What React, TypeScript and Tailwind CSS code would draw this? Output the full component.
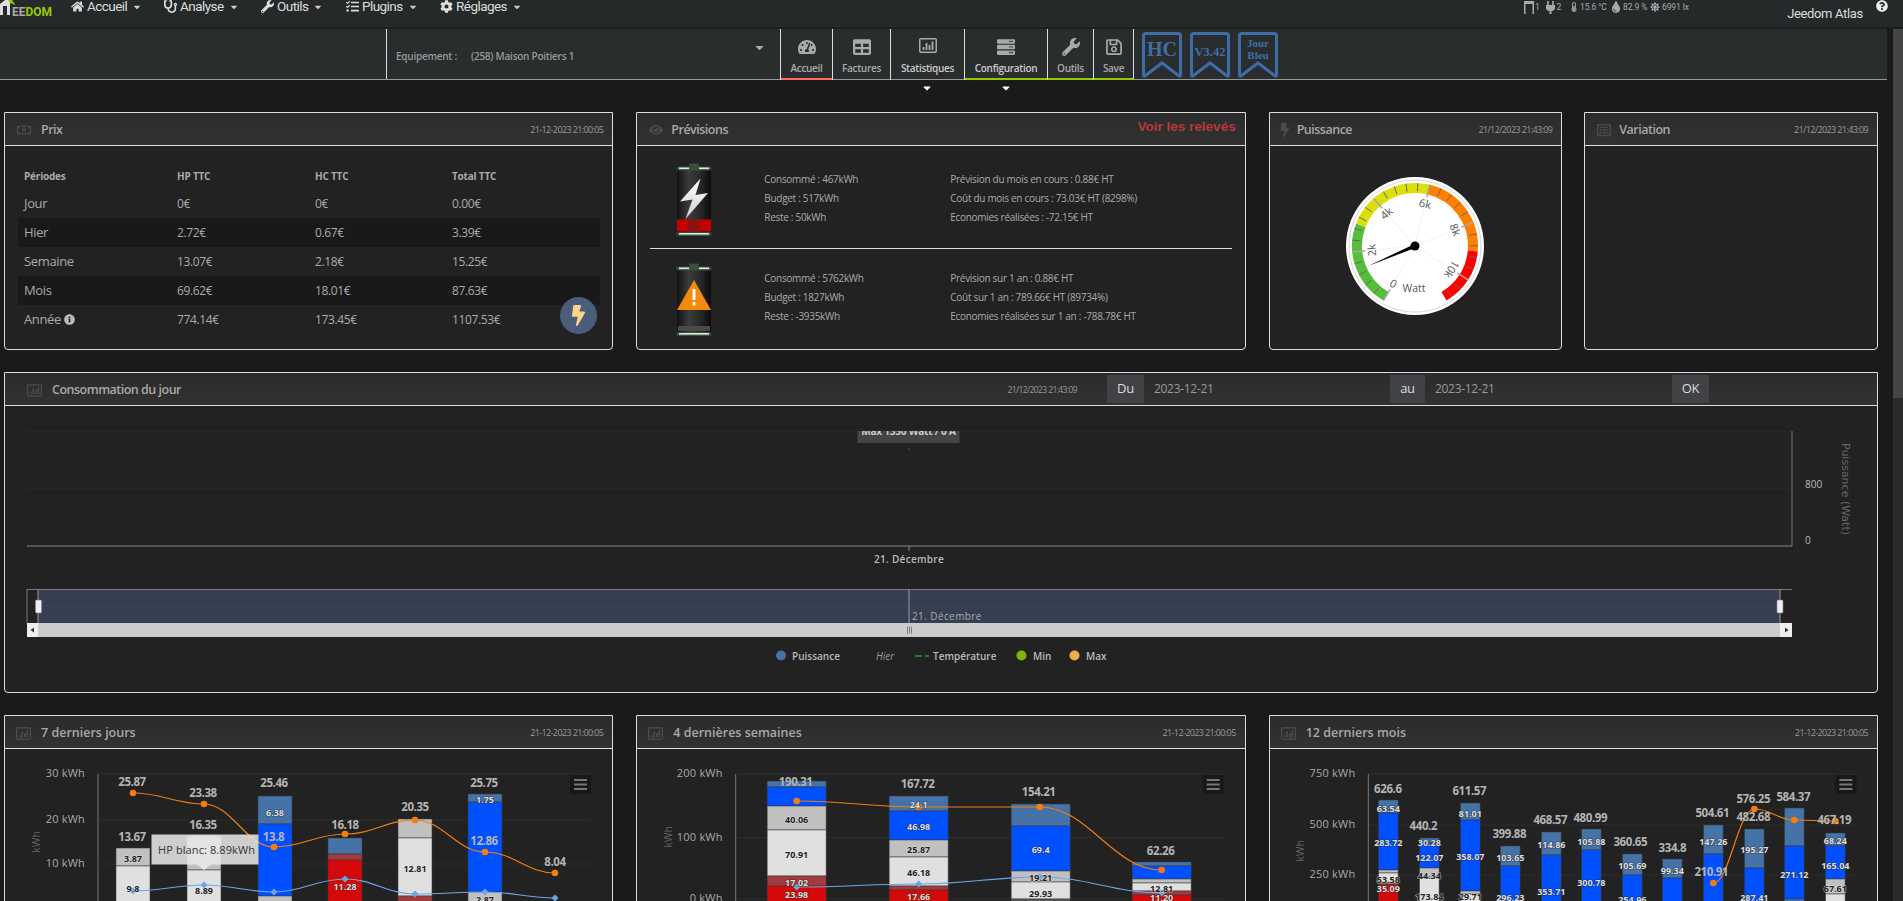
import type { ReactNode } from 'react';
import {
  FaBolt,
  FaCaretDown,
  FaCog,
  FaEye,
  FaHome,
  FaInfoCircle,
  FaQuestionCircle,
  FaRegListAlt,
  FaRegMoneyBillAlt,
  FaRegSave,
  FaServer,
  FaStethoscope,
  FaSun,
  FaTable,
  FaTachometerAlt,
  FaTasks,
  FaThermometerHalf,
  FaTint,
  FaWrench,
} from 'react-icons/fa';

const STEEL = '#4572a7';
const BLUE = '#0050ff';
const GREY = '#c0c0c0';
const WHITE = '#e0e0e0';
const DARKRED = '#a33a3f';
const RED = '#d40a0a';

function ChartIcon({ w, h }: { w: number; h: number }) {
  return (
    <svg width={w} height={h} viewBox="0 0 18 15" fill="none">
      <rect x="0.75" y="0.75" width="16.5" height="13.5" rx="1" stroke="currentColor" strokeWidth="1.5" />
      <path d="M4.5 12V9M7.5 12V5M10.5 12V7M13.5 12V3.5" stroke="currentColor" strokeWidth="1.8" />
    </svg>
  );
}

const menu = [
  { label: 'Accueil', icon: <FaHome />, width: 'w-[93px]' },
  { label: 'Analyse', icon: <FaStethoscope />, width: 'w-[97px]' },
  { label: 'Outils', icon: <FaWrench />, width: 'w-[85px]' },
  { label: 'Plugins', icon: <FaTasks />, width: 'w-[94px]' },
  { label: 'Réglages', icon: <FaCog />, width: 'w-[90px]' },
];

const tabs = [
  { label: 'Accueil', icon: <FaTachometerAlt />, width: 'w-[52px]', line: 'border-[#ff6f61]', text: 'text-[#aaa]' },
  { label: 'Factures', icon: <FaTable />, width: 'w-[58px]', line: 'border-transparent', text: 'text-[#aaa]' },
  { label: 'Statistiques', icon: <ChartIcon w={18} h={15} />, width: 'w-[74px]', line: 'border-transparent', text: 'text-[#ccc]' },
  { label: 'Configuration', icon: <FaServer />, width: 'w-[83px]', line: 'border-[#94ca02]', text: 'text-[#ccc]' },
  { label: 'Outils', icon: <FaWrench />, width: 'w-[46px]', line: 'border-[#94ca02]', text: 'text-[#aaa]' },
  { label: 'Save', icon: <FaRegSave />, width: 'w-[40px]', line: 'border-[#94ca02]', text: 'text-[#aaa]' },
];

const prices = [
  ['Jour', '0€', '0€', '0.00€'],
  ['Hier', '2.72€', '0.67€', '3.39€'],
  ['Semaine', '13.07€', '2.18€', '15.25€'],
  ['Mois', '69.62€', '18.01€', '87.63€'],
  ['Année', '774.14€', '173.45€', '1107.53€'],
];

function Card({ icon, title, date, right, className, pad = 'pl-[11px]', titleClass = 'ml-[10px] tracking-[-0.5px]', children }: {
  icon: ReactNode;
  title: string;
  date?: string;
  right?: ReactNode;
  className: string;
  pad?: string;
  titleClass?: string;
  children?: ReactNode;
}) {
  return (
    <section className={`relative flex flex-col rounded-b border border-[#ddd] bg-[#222] ${className}`}>
      <header className={`flex h-[33px] shrink-0 items-center border-b border-[#ddd] bg-gradient-to-b from-[#2b2b2b] to-[#323232] pr-[9px] ${pad}`}>
        <span className="mt-[2px] flex w-[15px] justify-center text-[14px] text-[#4c4c4c]">{icon}</span>
        <h2 className={`mt-[3px] text-[12.5px] font-semibold text-[#a8a8a8] ${titleClass}`}>{title}</h2>
        {date && <span className="ml-auto mt-[2px] text-[9px] tracking-[-0.62px] text-[#999]">{date}</span>}
        {right}
      </header>
      {children}
    </section>
  );
}

function Ribbon({ lines, size }: { lines: string[]; size: number }) {
  return (
    <svg width="40" height="46" viewBox="0 0 40 46" fill="none">
      <path
        d="M4 1.5H36Q38.5 1.5 38.5 4V43Q38.5 45 36.5 43.5L20 31L3.5 43.5Q1.5 45 1.5 43V4Q1.5 1.5 4 1.5Z"
        stroke="#3d6da6"
        strokeWidth="3"
      />
      {lines.map((line, i) => (
        <text
          key={line}
          x="20"
          y={lines.length === 1 ? 24 : 15 + i * 12}
          textAnchor="middle"
          fontSize={size}
          fontWeight="700"
          fontFamily="'Liberation Serif', serif"
          fill="#3f6ea8"
        >
          {line}
        </text>
      ))}
    </svg>
  );
}

function Battery({ warning }: { warning?: boolean }) {
  const id = warning ? 'warn' : 'bolt';
  return (
    <svg width="36" height="75" viewBox="0 0 36 75" className="shrink-0">
      <defs>
        <linearGradient id={`glass-${id}`} x1="0" x2="1" y1="0" y2="0">
          <stop offset="0" stopColor="#111" />
          <stop offset="0.35" stopColor="#3c3c3c" />
          <stop offset="0.7" stopColor="#272727" />
          <stop offset="1" stopColor="#0c0c0c" />
        </linearGradient>
        <linearGradient id={`flash-${id}`} x1="0" x2="0" y1="0" y2="1">
          <stop offset="0" stopColor="#fff" />
          <stop offset="1" stopColor="#cfcfcf" />
        </linearGradient>
      </defs>
      <rect x="13" y="0.5" width="10" height="4" rx="1" fill="#33502f" />
      <rect x="1" y="4" width="34" height="68" rx="4" fill={`url(#glass-${id})`} />
      <rect x="0.5" y="3.5" width="35" height="4" rx="2" fill="#35523a" />
      <rect x="3" y="4.5" width="10" height="1.6" fill="#e6e6e6" />
      <rect x="23" y="4.5" width="10" height="1.6" fill="#e6e6e6" />
      <rect x="0.5" y="69" width="35" height="4" rx="2" fill="#35523a" />
      <rect x="3" y="70" width="30" height="1.6" fill="#e6e6e6" />
      {warning ? (
        <>
          <rect x="2" y="63" width="32" height="5" fill="#4a4a4a" />
          <path d="M18 17L35 47H1Z" fill="#f28a0c" />
          <rect x="16.5" y="26" width="3" height="11" rx="1" fill="#fff" />
          <rect x="16.5" y="39" width="3" height="3.5" rx="1" fill="#fff" />
        </>
      ) : (
        <>
          <rect x="1" y="56.5" width="34" height="12" fill="#c40000" />
          <rect x="12" y="56.5" width="12" height="12" fill="#8f1010" />
          <path d="M24.5 15.5L4 38.5L16.5 36.5L9.5 56L32 30L19.5 32Z" fill={`url(#flash-${id})`} />
        </>
      )}
    </svg>
  );
}

const polar = (angle: number, r: number): [number, number] => {
  const a = ((angle - 90) * Math.PI) / 180;
  return [75 + r * Math.cos(a), 75 + r * Math.sin(a)];
};

function arc(from: number, to: number, r: number) {
  const [x1, y1] = polar(from, r);
  const [x2, y2] = polar(to, r);
  return `M${x1} ${y1}A${r} ${r} 0 ${to - from > 180 ? 1 : 0} 1 ${x2} ${y2}`;
}

function Gauge() {
  const step = 54.5 / 5;
  const ticks = Array.from({ length: 28 }, (_, i) => i);
  const marks = ['0', '2k', '4k', '6k', '8k', '10k'];
  const needle = -113;
  const tip = polar(needle, 51);
  const sideA = polar(needle + 90, 1.9);
  const sideB = polar(needle - 90, 1.9);
  return (
    <svg width="150" height="150" viewBox="0 0 150 150" className="mx-auto mt-[25px] block shrink-0">
      <circle cx="75" cy="75" r="69" fill="#fff" />
      <circle cx="75" cy="75" r="66" fill="#fff" stroke="#d8d8d8" strokeWidth="1" />
      {marks.map((_, i) => {
        const [x, y] = polar(-150 + i * 54.5, 48);
        return <line key={i} x1="75" y1="75" x2={x} y2={y} stroke="#f1f1f1" strokeWidth="1" />;
      })}
      <path d={arc(-150, -69, 58)} stroke="#55bf3b" strokeWidth="10" fill="none" />
      <path d={arc(-69, 13, 58)} stroke="#dddf0d" strokeWidth="10" fill="none" />
      <path d={arc(13, 95, 58)} stroke="#ff8000" strokeWidth="10" fill="none" />
      <path d={arc(95, 150, 58)} stroke="#ff0000" strokeWidth="10" fill="none" />
      {ticks.map((i) => {
        const angle = -150 + i * step;
        const major = i % 5 === 0;
        const [x1, y1] = polar(angle, 63);
        const [x2, y2] = polar(angle, major ? 50 : 55);
        return (
          <line
            key={i}
            x1={x1}
            y1={y1}
            x2={x2}
            y2={y2}
            stroke={major ? '#a8a8a8' : '#666'}
            strokeWidth={major ? 1.5 : 1}
          />
        );
      })}
      {marks.map((mark, i) => {
        const angle = -150 + i * 54.5;
        const [x, y] = polar(angle, 44);
        return (
          <text
            key={mark}
            x={x}
            y={y}
            fontSize="11"
            fill="#555"
            textAnchor="middle"
            dominantBaseline="central"
            transform={`rotate(${angle} ${x} ${y})`}
          >
            {mark}
          </text>
        );
      })}
      <text x="74" y="121" fontSize="10.5" fill="#555" textAnchor="middle">Watt</text>
      <polygon points={`${tip[0]},${tip[1]} ${sideA[0]},${sideA[1]} ${sideB[0]},${sideB[1]}`} fill="#000" />
      <circle cx="75" cy="75" r="4.5" fill="#000" />
    </svg>
  );
}

type Seg = [number, string];
type Bar = { x: number; top: number; segs: Seg[] };
type Tag = [number, number, string];

function spline(points: number[][]) {
  return points.reduce((d, [x, y], i) => {
    if (i === 0) return `M${x} ${y}`;
    const [px, py] = points[i - 1];
    const dx = (x - px) * 0.4;
    return `${d}C${px + dx} ${py} ${x - dx} ${y} ${x} ${y}`;
  }, '');
}

function InnerLabel({ x, y, t, dark }: { x: number; y: number; t: string; dark?: boolean }) {
  return (
    <text
      x={x}
      y={y}
      fontSize="9"
      fontWeight="700"
      textAnchor="middle"
      dominantBaseline="central"
      fill={dark ? '#222' : '#ddd'}
      stroke={dark ? '#eee' : '#222'}
      strokeWidth="1.2"
      strokeOpacity="0.6"
      paintOrder="stroke"
    >
      {t}
    </text>
  );
}

function StackedChart({ left, axisX, gridEnd, ticks, labelX, unitX, unitY, barWidth, bars, totals, inner, innerDark, orange, blue, children }: {
  left: number;
  axisX: number;
  gridEnd: number;
  ticks: [string, number][];
  labelX: number;
  unitX: number;
  unitY: number;
  barWidth: number;
  bars: Bar[];
  totals: Tag[];
  inner: Tag[];
  innerDark: Tag[];
  orange: number[][];
  blue: number[][];
  children?: ReactNode;
}) {
  return (
    <svg viewBox={`${left} 750 608 152`} width="608" height="152" className="block shrink-0">
      {ticks.map(([label, y]) => (
        <g key={label}>
          <line x1={axisX} x2={gridEnd} y1={y} y2={y} stroke="#2d2d2d" strokeWidth="1" />
          <text x={labelX} y={y - 1.5} fontSize="11" fill="#aaa" textAnchor="end" dominantBaseline="central" letterSpacing="0.2">{label}</text>
        </g>
      ))}
      <line x1={axisX} x2={axisX} y1="775" y2="902" stroke="#777" strokeWidth="1" />
      <text x={unitX} y={unitY} fontSize="10.5" fill="#666" textAnchor="middle" dominantBaseline="central" transform={`rotate(-90 ${unitX} ${unitY})`}>kWh</text>
      {bars.map((bar) => {
        let y = bar.top;
        return bar.segs.map(([end, color]) => {
          const rect = (
            <rect
              key={`${bar.x}-${end}`}
              x={bar.x - barWidth / 2}
              y={y}
              width={barWidth}
              height={end - y}
              fill={color}
              stroke="#3a3a3a"
              strokeOpacity="0.7"
              strokeWidth="0.8"
            />
          );
          y = end;
          return rect;
        });
      })}
      {blue.length > 0 && <path d={spline(blue)} fill="none" stroke="#6aa5e8" strokeWidth="1.2" />}
      {blue.map(([x, y]) => (
        <polygon key={x} points={`${x},${y - 3.5} ${x + 3.5},${y} ${x},${y + 3.5} ${x - 3.5},${y}`} fill="#6aa5e8" />
      ))}
      <path d={spline(orange)} fill="none" stroke="#f57c10" strokeWidth="1.2" />
      {orange.map(([x, y]) => (
        <circle key={x} cx={x} cy={y} r="3.3" fill="#f57c10" />
      ))}
      {inner.map(([x, y, t]) => <InnerLabel key={t} x={x} y={y} t={t} />)}
      {innerDark.map(([x, y, t]) => <InnerLabel key={t} x={x} y={y} t={t} dark />)}
      {totals.map(([x, y, t]) => (
        <text key={t} x={x} y={y} fontSize="11.5" fontWeight="700" fill="#b4b4b4" textAnchor="middle" dominantBaseline="central" letterSpacing="-0.4">{t}</text>
      ))}
      <rect x={gridEnd - 21} y="776" width="21" height="19" rx="2" fill="#181818" />
      <path d={`M${gridEnd - 17} 781H${gridEnd - 4}M${gridEnd - 17} 785.5H${gridEnd - 4}M${gridEnd - 17} 790H${gridEnd - 4}`} stroke="#777" strokeWidth="2" />
      {children}
    </svg>
  );
}

function DailyChart() {
  return (
    <svg viewBox="5 407 1872 286" width="1872" height="286" className="block shrink-0">
      <line x1="27" x2="1792" y1="432" y2="432" stroke="#2b2b2b" />
      <line x1="27" x2="1792" y1="490" y2="490" stroke="#2b2b2b" />
      <line x1="27" x2="1792" y1="547" y2="547" stroke="#888" />
      <line x1="1792" x2="1792" y1="432" y2="547" stroke="#777" />
      <line x1="909" x2="909" y1="547" y2="552" stroke="#888" />
      <clipPath id="plot-clip"><rect x="27" y="432" width="1765" height="115" /></clipPath>
      <g clipPath="url(#plot-clip)">
        <rect x="857.5" y="425" width="102" height="19" fill="#444" />
        <text x="908.5" y="436" fontSize="10" fontWeight="700" fill="#ccc" textAnchor="middle" letterSpacing="-0.2">Max 1350 Watt / 0 A</text>
        <rect x="908.5" y="449.5" width="1" height="1" fill="#777" />
      </g>
      <text x="909" y="560" fontSize="10" fontWeight="600" fill="#bbb" textAnchor="middle" dominantBaseline="central" letterSpacing="0.3">21. Décembre</text>
      <text x="1805" y="485" fontSize="10" fill="#bbb" dominantBaseline="central">800</text>
      <text x="1805" y="541" fontSize="10" fill="#bbb" dominantBaseline="central">0</text>
      <text x="1845" y="490" fontSize="11" fill="#666" fontFamily="'DejaVu Sans', sans-serif" textAnchor="middle" dominantBaseline="central" transform="rotate(90 1845 490)">Puissance (Watt)</text>
      <rect x="38" y="590" width="1742" height="34" fill="#363f52" />
      <line x1="27" x2="1792" y1="590.5" y2="590.5" stroke="#777" />
      <line x1="27" x2="27" y1="590" y2="624" stroke="#777" />
      <line x1="38" x2="38" y1="590" y2="624" stroke="#999" />
      <line x1="1780" x2="1780" y1="590" y2="624" stroke="#999" />
      <line x1="38" x2="1780" y1="607" y2="607" stroke="#3e4759" />
      <line x1="909" x2="909" y1="590" y2="624" stroke="#99a" />
      <text x="912" y="617" fontSize="10" fill="#aaa" dominantBaseline="central" letterSpacing="0.4">21. Décembre</text>
      <rect x="35.5" y="601" width="6" height="13" rx="1" fill="#eee" stroke="#888" strokeWidth="0.6" />
      <rect x="1777" y="601" width="6" height="13" rx="1" fill="#eee" stroke="#888" strokeWidth="0.6" />
      <rect x="27" y="624" width="1765" height="14" fill="#ccc" />
      <rect x="27" y="624" width="11" height="14" fill="#eee" />
      <rect x="1780" y="624" width="12" height="14" fill="#eee" />
      <path d="M34 628.5L30.5 631L34 633.5Z" fill="#333" />
      <path d="M1785 628.5L1788.5 631L1785 633.5Z" fill="#333" />
      <path d="M907.5 627.5V634.5M909.5 627.5V634.5M911.5 627.5V634.5" stroke="#666" strokeWidth="0.8" />
      <circle cx="781" cy="656.5" r="5" fill="#4572a7" />
      <text x="792" y="657" fontSize="10" fontWeight="600" fill="#bbb" dominantBaseline="central">Puissance</text>
      <text x="876" y="657" fontSize="10" fontStyle="italic" fill="#999" dominantBaseline="central">Hier</text>
      <path d="M915 657H922M925 657H929" stroke="#1a9b2c" strokeWidth="1.5" />
      <text x="933" y="657" fontSize="10" fontWeight="600" fill="#bbb" dominantBaseline="central">Température</text>
      <circle cx="1021.5" cy="656.5" r="5" fill="#7cb60a" />
      <text x="1033" y="657" fontSize="10" fontWeight="600" fill="#bbb" dominantBaseline="central">Min</text>
      <circle cx="1074.5" cy="656.5" r="5" fill="#f0ad4e" />
      <text x="1086" y="657" fontSize="10" fontWeight="600" fill="#bbb" dominantBaseline="central">Max</text>
    </svg>
  );
}

const daysBars: Bar[] = [
  { x: 133, top: 849, segs: [[867, GREY], [905, WHITE]] },
  { x: 204, top: 836, segs: [[871, GREY], [905, WHITE]] },
  { x: 275, top: 797, segs: [[825, STEEL], [897, BLUE], [905, GREY]] },
  { x: 345, top: 839, segs: [[855, STEEL], [861, DARKRED], [905, RED]] },
  { x: 415, top: 820, segs: [[839, GREY], [897, WHITE], [905, DARKRED]] },
  { x: 485, top: 795, segs: [[803, STEEL], [893, BLUE], [905, GREY]] },
];

const weeksBars: Bar[] = [
  { x: 797, top: 782, segs: [[788, STEEL], [807, BLUE], [831, GREY], [877, WHITE], [887, DARKRED], [905, RED]] },
  { x: 919, top: 797, segs: [[812, STEEL], [841, BLUE], [858, GREY], [887, WHITE], [891, DARKRED], [905, RED]] },
  { x: 1041, top: 805, segs: [[827, STEEL], [872, BLUE], [883, GREY], [900, WHITE], [905, '#555']] },
  { x: 1162, top: 863, segs: [[867, STEEL], [880, BLUE], [884, GREY], [892, WHITE], [896, DARKRED], [905, RED]] },
];

const monthsBars: Bar[] = [
  { x: 1388, top: 801, segs: [[814, STEEL], [871, BLUE], [874, GREY], [884, WHITE], [886, DARKRED], [905, RED]] },
  { x: 1429, top: 839, segs: [[844, STEEL], [869, BLUE], [878, GREY], [905, WHITE]] },
  { x: 1470, top: 804, segs: [[821, STEEL], [892, BLUE], [895, GREY], [905, WHITE]] },
  { x: 1510, top: 847, segs: [[867, STEEL], [905, BLUE]] },
  { x: 1551, top: 833, segs: [[856, STEEL], [905, BLUE]] },
  { x: 1591, top: 830, segs: [[851, STEEL], [905, BLUE]] },
  { x: 1632, top: 855, segs: [[876, STEEL], [905, BLUE]] },
  { x: 1672, top: 860, segs: [[879, STEEL], [905, BLUE]] },
  { x: 1713, top: 826, segs: [[855, STEEL], [905, BLUE]] },
  { x: 1754, top: 830, segs: [[869, STEEL], [905, BLUE]] },
  { x: 1794, top: 809, segs: [[847, STEEL], [900, BLUE], [905, STEEL]] },
  { x: 1835, top: 834, segs: [[847, STEEL], [880, BLUE], [895, GREY], [905, WHITE]] },
];

export default function App() {
  return (
    <div className="flex h-[901px] w-[1903px] flex-col overflow-hidden bg-[#1a1a1a] font-['Open_Sans',sans-serif]">
      <nav className="relative flex h-[29px] shrink-0 items-start overflow-hidden border-b-2 border-[#1c1e1e] bg-[#262929] font-['Roboto',sans-serif] text-[13.5px] leading-[13px] tracking-[-0.55px] text-[#ddd]">
        <div className="relative h-[27px] w-[71px] shrink-0">
          <svg width="16" height="16" viewBox="0 0 16 16" className="absolute left-0 top-0">
            <path d="M0 4L5 0H10V15H0Z" fill="#ddd" />
            <path d="M3 6H7V15H3Z" fill="#262929" />
            <path d="M8 0H12L15.5 5L10 3Z" fill="#94ca02" />
          </svg>
          <span className="absolute left-[12px] top-[6px] text-[12px] font-bold leading-[12px] tracking-[0px]">
            <span className="text-[#aaa]">EE</span>
            <span className="text-[#94ca02]">DOM</span>
          </span>
        </div>
        {menu.map((item) => (
          <div key={item.label} className={`flex h-[13px] shrink-0 items-center ${item.width}`}>
            <span className="flex w-[16px] text-[13px]">{item.icon}</span>
            <span>{item.label}</span>
            <FaCaretDown className="ml-[5px] text-[10px] text-[#ccc]" />
          </div>
        ))}
        <div className="absolute left-[1524px] top-0 flex h-[14px] items-center text-[8.5px] tracking-[-0.1px] text-[#aaa]">
          <div className="flex w-[20.5px] items-center">
            <svg width="10" height="13" viewBox="0 0 10 13"><path d="M0 0H10V13H8.5V3H1.5V13H0Z" fill="#aaa" /></svg>
            <span className="ml-[1px] self-start">1</span>
          </div>
          <div className="flex w-[24.5px] items-center">
            <svg width="9" height="13" viewBox="0 0 9 13" className="ml-[1px]"><path d="M2 0V4M7 0V4" stroke="#aaa" strokeWidth="1.6" /><path d="M0 4H9V7Q9 9.5 5.5 10V13H3.5V10Q0 9.5 0 7Z" fill="#aaa" /></svg>
            <span className="ml-[2px] self-start">2</span>
          </div>
          <div className="flex w-[41px] items-center">
            <FaThermometerHalf className="text-[10px]" />
            <span className="ml-[1px]">15.6 °C</span>
          </div>
          <div className="flex w-[40px] items-center">
            <FaTint className="text-[12px]" />
            <span className="ml-[1px]">82.9 %</span>
          </div>
          <div className="flex w-[39px] items-center">
            <FaSun className="text-[10px]" />
            <span className="ml-[2px]">6991 lx</span>
          </div>
        </div>
        <div className="absolute left-[1778px] top-[-14px] w-[94px] whitespace-nowrap text-center text-[13px] leading-[16px] tracking-[-0.35px]">
          <p>21:43:10</p>
          <p className="mt-[4px]">Jeedom Atlas</p>
        </div>
        <FaQuestionCircle className="absolute left-[1876px] top-0 text-[12px] text-[#eee]" />
      </nav>

      <div className="flex min-h-0 flex-1">
        <main className="min-w-0 flex-1">
          <div className="mr-[6px] flex h-[51px] items-stretch border-b border-[#999] bg-[#2a2d2d]">
            <div className="ml-[386px] flex w-[394px] items-center border-l border-[#ddd] pl-[9px] text-[10px] font-semibold tracking-[-0.25px] text-[#999]">
              <span className="mt-[4px] w-[75px]">Equipement :</span>
              <span className="mt-[4px]">(258) Maison Poitiers 1</span>
              <FaCaretDown className="mb-[14px] ml-auto mr-[14px] text-[13px] text-[#aaa]" />
            </div>
            {tabs.map((tab) => (
              <div key={tab.label} className={`flex h-[51px] shrink-0 flex-col items-center border-l border-[#ddd] ${tab.width}`}>
                <div className="flex h-[32px] items-start pt-[9px] text-[18px] text-[#aaa]">{tab.icon}</div>
                <div className={`flex h-[19px] w-full items-start justify-center border-b-2 ${tab.line} text-[10px] font-semibold leading-[14px] tracking-[-0.3px] ${tab.text}`}>
                  {tab.label}
                </div>
              </div>
            ))}
            <div className="flex items-start gap-[8px] border-l border-[#ddd] pl-[8px] pt-[3px]">
              <Ribbon lines={['HC']} size={20} />
              <Ribbon lines={['V3.42']} size={12.5} />
              <Ribbon lines={['Jour', 'Bleu']} size={11} />
            </div>
          </div>
          <div className="relative mr-[15px] h-[32px]">
            <FaCaretDown className="absolute left-[921px] top-[2px] text-[12px] text-white" />
            <FaCaretDown className="absolute left-[1000px] top-[2px] text-[12px] text-white" />
          </div>

          <div className="ml-[4px] mr-[15px] flex flex-col gap-[22px]">
            <div className="grid grid-cols-3 gap-[23px]">
              <Card icon={<FaRegMoneyBillAlt />} title="Prix" date="21-12-2023 21:00:05" className="h-[238px]">
                <div className="ml-[13px] w-[582px] pt-[16px] text-[12px] text-[#aaa]">
                  <div className="grid h-[27px] grid-cols-[153px_138px_137px_1fr] items-center pl-[6px] pt-[1px] text-[10px] font-bold tracking-[-0.2px] text-[#aaa]">
                    <span>Périodes</span>
                    <span>HP TTC</span>
                    <span>HC TTC</span>
                    <span>Total TTC</span>
                  </div>
                  {prices.map((row, i) => (
                    <div key={row[0]} className={`grid h-[29px] grid-cols-[153px_138px_137px_1fr] items-center pl-[6px] tracking-[-0.35px] ${i % 2 === 1 ? 'bg-[#191919]' : ''}`}>
                      <span className="flex items-center gap-[3px] text-[13px]">
                        {row[0]}
                        {row[0] === 'Année' && <FaInfoCircle className="text-[11px] text-[#bbb]" />}
                      </span>
                      <span>{row[1]}</span>
                      <span>{row[2]}</span>
                      <span>{row[3]}</span>
                    </div>
                  ))}
                </div>
                <div className="absolute left-[555px] top-[184px] flex h-[37px] w-[37px] items-center justify-center rounded-full bg-[#4a5d7a] text-[21px] text-[#fdd28a]">
                  <FaBolt />
                </div>
              </Card>

              <Card
                icon={<FaEye />}
                title="Prévisions"
                titleClass="ml-[8px] tracking-[-0.5px]"
                className="h-[238px]"
                right={<span className="ml-auto mb-[4px] font-['Liberation_Sans',sans-serif] text-[13.5px] font-bold tracking-[0px] text-[#b33a3a]">Voir les relevés</span>}
              >
                <div className="flex h-[102px] items-start pl-[39px] pt-[17px] text-[10px] leading-[19px] tracking-[-0.3px] text-[#aaa]">
                  <Battery />
                  <div className="ml-[52px] mt-[7px] w-[186px]">
                    <p>Consommé : 467kWh</p>
                    <p>Budget : 517kWh</p>
                    <p>Reste : 50kWh</p>
                  </div>
                  <div className="mt-[7px]">
                    <p>Prévision du mois en cours : 0.88€ HT</p>
                    <p>Coût du mois en cours : 73.03€ HT (8298%)</p>
                    <p>Economies réalisées : -72.15€ HT</p>
                  </div>
                </div>
                <div className="mx-[13px] h-px shrink-0 bg-[#ddd]" />
                <div className="flex items-start pl-[39px] pt-[14px] text-[10px] leading-[19px] tracking-[-0.3px] text-[#aaa]">
                  <Battery warning />
                  <div className="ml-[52px] mt-[6px] w-[186px]">
                    <p>Consommé : 5762kWh</p>
                    <p>Budget : 1827kWh</p>
                    <p>Reste : -3935kWh</p>
                  </div>
                  <div className="mt-[6px]">
                    <p>Prévision sur 1 an : 0.88€ HT</p>
                    <p>Coût sur 1 an : 789.66€ HT (89734%)</p>
                    <p>Economies réalisées sur 1 an : -788.78€ HT</p>
                  </div>
                </div>
              </Card>

              <div className="grid grid-cols-2 gap-[22px]">
                <Card icon={<FaBolt />} title="Puissance" date="21/12/2023 21:43:09" pad="pl-[8px]" titleClass="ml-[4px] tracking-[-0.5px]" className="h-[238px]">
                  <Gauge />
                </Card>
                <Card icon={<FaRegListAlt />} title="Variation" date="21/12/2023 21:43:09" titleClass="ml-[8px] tracking-[-0.5px]" className="h-[238px]" />
              </div>
            </div>

            <Card
              icon={<ChartIcon w={15} h={13} />}
              title="Consommation du jour"
              pad="pl-[22px]"
              className="h-[321px]"
              right={
                <div className="ml-auto flex h-[28px] items-stretch text-[12px] tracking-[-0.3px] text-[#999]">
                  <span className="mr-[30px] self-center pt-[2px] text-[8.5px] tracking-[-0.6px]">21/12/2023 21:43:09</span>
                  <span className="flex w-[37px] items-center justify-center bg-[#404245] text-[13px] text-[#ddd]">Du</span>
                  <span className="flex w-[246px] items-center pl-[10px]">2023-12-21</span>
                  <span className="flex w-[35px] items-center justify-center bg-[#404245] text-[13px] text-[#ddd]">au</span>
                  <span className="flex w-[247px] items-center pl-[10px]">2023-12-21</span>
                  <span className="flex w-[37px] items-center justify-center bg-[#404245] text-[13px] text-[#ddd]">OK</span>
                  <span className="w-[159px]" />
                </div>
              }
            >
              <DailyChart />
            </Card>

            <div className="grid grid-cols-3 gap-[23px]">
              <Card icon={<ChartIcon w={15} h={13} />} title="7 derniers jours" titleClass="ml-[10px] tracking-[0px]" date="21-12-2023 21:00:05" className="h-[400px]">
                <StackedChart
                  left={5}
                  axisX={98}
                  gridEnd={591}
                  ticks={[['30 kWh', 775], ['20 kWh', 821], ['10 kWh', 865]]}
                  labelX={85}
                  unitX={36}
                  unitY={843}
                  barWidth={34}
                  bars={daysBars}
                  totals={[[132, 782, '25.87'], [203, 793, '23.38'], [132, 837, '13.67'], [203, 825, '16.35'], [274, 783, '25.46'], [345, 825, '16.18'], [415, 807, '20.35'], [484, 783, '25.75'], [555, 862, '8.04'], [273.5, 837, '13.8'], [484, 841, '12.86']]}
                  inner={[[275, 813, '6.38'], [345, 887, '11.28'], [485, 800, '1.75']]}
                  innerDark={[[133, 859, '3.87'], [133, 889, '9.8'], [204, 891, '8.89'], [415, 869, '12.81'], [485, 900, '2.87']]}
                  orange={[[133, 794], [204, 805], [274, 848], [345, 835], [415, 821], [485, 853], [555, 874]]}
                  blue={[[133, 892], [204, 886], [274, 893], [345, 880], [415, 895], [485, 893], [555, 899]]}
                >
                  <rect x="151.5" y="835.5" width="107" height="30" fill="#dcdcdc" fillOpacity="0.93" />
                  <path d="M197 865.5H211L204 871Z" fill="#e6e6e6" />
                  <rect x="187" y="838" width="34" height="28" fill="#fff" fillOpacity="0.25" />
                  <text x="158" y="850" fontSize="11" fill="#333" dominantBaseline="central" letterSpacing="0.1">HP blanc: 8.89kWh</text>
                </StackedChart>
              </Card>

              <Card icon={<ChartIcon w={15} h={13} />} title="4 dernières semaines" titleClass="ml-[10px] tracking-[0px]" date="21-12-2023 21:00:05" className="h-[400px]">
                <StackedChart
                  left={637.33}
                  axisX={736}
                  gridEnd={1224}
                  ticks={[['200 kWh', 775], ['100 kWh', 838.5], ['0 kWh', 900]]}
                  labelX={723}
                  unitX={668.5}
                  unitY={838}
                  barWidth={59}
                  bars={weeksBars}
                  totals={[[796, 782, '190.31'], [918, 784, '167.72'], [1039, 792, '154.21'], [1161, 851, '62.26']]}
                  inner={[[919, 805, '24.1'], [919, 827.5, '46.98'], [1041, 850.5, '69.4'], [797, 883, '17.02'], [797, 895, '23.98'], [919, 897, '17.66'], [1162, 898, '11.20']]}
                  innerDark={[[797, 820, '40.06'], [797, 855, '70.91'], [919, 850.5, '25.87'], [919, 873, '46.18'], [1041, 878, '19.21'], [1041, 894, '29.93'], [1162, 889, '12.81']]}
                  orange={[[797, 802], [919, 808], [1040, 808], [1162, 871]]}
                  blue={[[797, 888], [919, 885], [1040, 878], [1162, 894]]}
                />
              </Card>

              <Card icon={<ChartIcon w={15} h={13} />} title="12 derniers mois" titleClass="ml-[10px] tracking-[0px]" date="21-12-2023 21:00:05" className="h-[400px]">
                <StackedChart
                  left={1269.67}
                  axisX={1368}
                  gridEnd={1856}
                  ticks={[['750 kWh', 775], ['500 kWh', 826], ['250 kWh', 876]]}
                  labelX={1355}
                  unitX={1300}
                  unitY={852}
                  barWidth={19.6}
                  bars={monthsBars}
                  totals={[[1387.5, 789, '626.6'], [1423, 826, '440.2'], [1469, 791, '611.57'], [1509, 834, '399.88'], [1550, 820, '468.57'], [1590, 818, '480.99'], [1630, 842, '360.65'], [1672, 848, '334.8'], [1712, 813, '504.61'], [1711, 872, '210.91'], [1753, 817, '482.68'], [1753, 799, '576.25'], [1793, 797, '584.37'], [1834, 820, '467.19']]}
                  inner={[[1388, 809, '63.54'], [1388, 843, '283.72'], [1388, 889, '35.09'], [1429, 843, '30.28'], [1429, 858, '122.07'], [1470, 814, '81.01'], [1470, 857, '358.07'], [1510, 858, '103.65'], [1510, 898, '296.23'], [1551, 845, '114.86'], [1551, 892, '353.71'], [1591, 842, '105.88'], [1591, 883, '300.78'], [1632, 866, '105.69'], [1632, 900, '254.96'], [1672, 871, '99.34'], [1713, 842, '147.26'], [1754, 850, '195.27'], [1754, 898, '287.41'], [1794, 875, '271.12'], [1835, 841, '68.24'], [1835, 866, '165.04']]}
                  innerDark={[[1388, 880, '53.58'], [1429, 876, '44.34'], [1429, 897, '173.84'], [1470, 897, '29.71'], [1835, 889, '67.61']]}
                  orange={[[1713, 884], [1754, 810], [1794, 821], [1835, 822]]}
                  blue={[]}
                />
              </Card>
            </div>
          </div>
        </main>
        <aside className="h-full w-[10px] shrink-0 bg-[#2b2b2b]">
          <div className="h-[369px] w-full bg-[#454545]" />
        </aside>
      </div>
    </div>
  );
}
